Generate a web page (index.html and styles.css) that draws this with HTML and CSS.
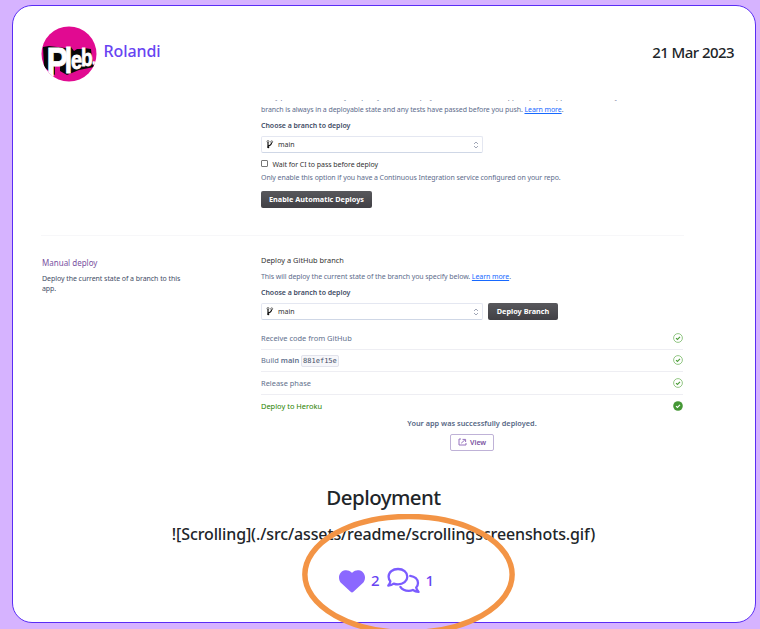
FILE: index.html
```html
<!DOCTYPE html>
<html lang="en">
<head>
<meta charset="utf-8">
<title>Rolandi - Deployment</title>
<link rel="stylesheet" href="styles.css">
</head>
<body>
<svg class="symbols" aria-hidden="true">
  <symbol id="check" viewBox="0 0 10 10"><circle cx="5" cy="5" r="4.4" fill="none" stroke="#77b966" stroke-width=".8"/><path d="M3 5.2 4.4 6.4 7 3.8" fill="none" stroke="#4c9c38" stroke-width="1.1"/></symbol>
  <symbol id="branch" viewBox="0 0 8 9"><path d="M2 1.5V7.5M2.2 5.8C4.5 5.4 5.6 4.8 5.6 2.2" fill="none" stroke="#111" stroke-width="1.2"/><circle cx="2" cy="1.5" r="1" fill="#fff" stroke="#222" stroke-width=".6"/><circle cx="5.7" cy="1.8" r="1" fill="#fff" stroke="#222" stroke-width=".6"/><circle cx="2.3" cy="7.3" r="1" fill="#111"/></symbol>
  <symbol id="sort" viewBox="0 0 6 8"><path d="M1 3 3 1 5 3M1 5 3 7 5 5" fill="none" stroke="#8991a4" stroke-width=".8"/></symbol>
</svg>
<article class="card">
  <header class="head">
    <svg class="avatar" viewBox="0 0 56 56">
      <clipPath id="round"><circle cx="28" cy="28" r="27.5"/></clipPath>
      <g clip-path="url(#round)">
        <rect width="56" height="56" fill="#e10a91"/>
        <path d="M2 21 8 20 24 22 30 21 33 25 36 23 43 23 43 22 50 23 51 32 53 41 38 44 26 49 19 45 13 49 3 41Z" fill="#080808"/>
        <path d="M14 40 19 38 19 46 14 49Z" fill="#e10a91"/>
        <text class="logo" transform="rotate(1 8 49)"><tspan x="6" y="50.500" font-size="40">P</tspan><tspan x="28.500" y="47" font-size="35">l</tspan><tspan x="36.500" y="43" font-size="25">e</tspan><tspan x="49" y="40" font-size="24">b</tspan><tspan x="63" y="38" font-size="14">.</tspan></text>
      </g>
    </svg>
    <span class="name">Rolandi</span>
    <time class="date">21 Mar 2023</time>
  </header>

  <section class="shot">
    <div class="row auto">
      <div class="main">
        <p class="cut">Every push to the branch you specify here will deploy a new version of this app. Deploys happen automatically: be sure that this</p>
        <p class="muted intro">branch is always in a deployable state and any tests have passed before you push. <a>Learn more</a>.</p>
        <p class="label l1">Choose a branch to deploy</p>
        <div class="select"><svg class="br"><use href="#branch"/></svg><span>main</span><svg class="sort"><use href="#sort"/></svg></div>
        <label class="wait"><i class="box"></i><span>Wait for CI to pass before deploy</span></label>
        <p class="muted only">Only enable this option if you have a Continuous Integration service configured on your repo.</p>
        <button class="btn enable"><span>Enable Automatic Deploys</span></button>
      </div>
    </div>
    <div class="row manual">
      <div class="side">
        <h3>Manual deploy</h3>
        <p>Deploy the current state of a branch to this<br>app.</p>
      </div>
      <div class="main">
        <h4>Deploy a GitHub branch</h4>
        <p class="muted will">This will deploy the current state of the branch you specify below. <a>Learn more</a>.</p>
        <p class="label l2">Choose a branch to deploy</p>
        <div class="pick">
          <div class="select"><svg class="br"><use href="#branch"/></svg><span>main</span><svg class="sort"><use href="#sort"/></svg></div>
          <button class="btn deploy"><span>Deploy Branch</span></button>
        </div>
        <ul class="steps">
          <li><span>Receive code from GitHub</span><svg><use href="#check"/></svg></li>
          <li><span>Build <b>main</b> <code>881ef15e</code></span><svg><use href="#check"/></svg></li>
          <li><span>Release phase</span><svg><use href="#check"/></svg></li>
          <li class="done"><span>Deploy to Heroku</span><svg viewBox="0 0 10 10"><circle cx="5" cy="5" r="4.8" fill="#459735"/><path d="M3 5.2 4.4 6.4 7 3.8" fill="none" stroke="#fff" stroke-width="1.1"/></svg></li>
        </ul>
        <p class="success">Your app was successfully deployed.</p>
        <button class="view"><svg viewBox="0 0 9 8"><path d="M3 1H1V7H8V5M3.2 5.2 6.8 2M4.5 1.4H7.6V4" fill="none" stroke="#8a62b5" stroke-width=".9"/></svg><span>View</span></button>
      </div>
    </div>
  </section>

  <h2 class="title">Deployment</h2>
  <p class="body">![Scrolling](./src/assets/readme/scrollingscreenshots.gif)</p>
  <footer class="stats">
    <svg class="heart" viewBox="0 0 512 512"><path fill="#8b68ff" d="M47.6 300.4 228.3 469.1c7.5 7 17.4 10.9 27.700 10.900s20.200-3.900 27.700-10.900L464.400 300.400c30.400-28.300 47.600-68 47.600-109.500v-5.800c0-69.900-50.500-129.500-119.400-141C347 36.500 300.600 51.400 268 84L256 96 244 84c-32.600-32.600-79-47.500-124.600-39.900C50.500 55.600 0 115.200 0 185.100v5.800c0 41.500 17.200 81.200 47.600 109.500z"/></svg>
    <span class="likes">2</span>
    <svg class="chat" viewBox="0 0 33 28" fill="none" stroke="#7b5cff" stroke-width="2.300" stroke-linecap="round" stroke-linejoin="round"><path d="M11 2C16.300 2 20.300 5.300 20.300 9.700S16.300 17.400 11 17.400C9.400 17.400 8 17.100 6.700 16.600C5.200 17.800 3.400 18.500 1.300 18.600C2.400 17.400 3.200 16 3.400 14.200C2.200 12.900 1.600 11.400 1.600 9.700C1.600 5.300 5.700 2 11 2Z"/><path d="M23.200 8.800C27.700 9.300 31 12.200 31 16.100C31 17.800 30.400 19.300 29.200 20.500C29.500 22.300 30.300 23.700 31.500 24.900C29.300 24.800 27.500 24.100 25.900 23C24.700 23.500 23.300 23.800 21.800 23.800C18 23.800 14.900 22.300 13.400 19.900"/></svg>
    <span class="comments">1</span>
  </footer>
</article>
<svg class="ring" viewBox="0 0 216 122"><ellipse cx="108" cy="61" rx="104.500" ry="58.500" fill="none" stroke="#f39445" stroke-width="5.500"/></svg>
</body>
</html>
```
FILE: styles.css
```css
* { box-sizing: border-box; margin: 0; padding: 0; }
html, body { height: 629px; overflow: hidden; }
body {
  position: relative;
  padding: 5px 4px 6px 12px;
  background: #d6b3ff;
  color: #212529;
  font-family: "Noto Sans", sans-serif;
}
.symbols { position: absolute; width: 0; height: 0; }
.card {
  width: 744px;
  height: 618px;
  padding: 20px 20px 0 28px;
  border: 1px solid #5a2df5;
  border-radius: 20px;
  background: #fff;
}
.head { display: flex; align-items: center; height: 56px; }
.avatar { width: 56px; height: 56px; margin: -1px 0 0 -.5px; }
.logo { font-family: "Liberation Sans", sans-serif; font-weight: 700; fill: #fff; stroke: #fff; stroke-width: .8; transform: scaleX(.8) translateX(1px); }
.name, .date, .title, .body, .stats { font-weight: 500; white-space: nowrap; }
.name { margin: -6px 0 0 7px; color: #6744f2; font-size: 16px; line-height: 20px; letter-spacing: -.1px; }
.date { margin: -4px 1px 0 auto; font-size: 15px; line-height: 20px; letter-spacing: -.56px; }

.shot { height: 361px; margin-top: 18px; font-size: 7px; line-height: 10px; white-space: nowrap; }
.row { display: flex; width: 643px; }
.main { width: 423px; }
.auto { justify-content: flex-end; height: 136px; border-bottom: 1px solid #f7f7f9; }
.cut { display: flex; align-items: flex-end; height: 2px; overflow: hidden; color: #5d6c8c; line-height: 10px; letter-spacing: -.03px; }
.muted { color: #5d6c8c; letter-spacing: -.09px; }
.muted a { color: #1769ff; text-decoration: underline; }
.intro { margin-top: 3px; }
.label { color: #3f4d66; font-weight: 600; letter-spacing: -.04px; }
.l1 { margin-top: 6px; }
.select {
  display: flex;
  align-items: center;
  width: 222px;
  height: 17px;
  padding: 0 3px 0 4px;
  border: 1px solid #e4e7f1;
  border-bottom-color: #cfd7e6;
  border-radius: 2px;
  color: #333;
}
.br { width: 8px; height: 9px; }
.select span { margin-left: 4px; }
.sort { width: 6px; height: 8px; margin-left: auto; }
.l1 + .select { margin-top: 5px; }
.wait { display: flex; align-items: center; height: 10px; margin-top: 7px; color: #333; letter-spacing: -.05px; }
.box { width: 7px; height: 7px; margin-top: -3px; border: 1px solid #777; border-radius: 1px; }
.wait span { margin-left: 4.500px; }
.only { margin-top: 3px; letter-spacing: -.075px; }
.btn {
  height: 17px;
  border: 0;
  border-radius: 2px;
  background: linear-gradient(#58585c, #414045);
  color: #fff;
  font: 700 7.300px/17px "Noto Sans", sans-serif;
}
.enable { display: block; width: 111px; margin-top: 8px; }

.manual { padding-top: 20px; }
.side { width: 220px; padding: 1px 0 0 1px; color: #3f4d66; }
.side h3 { color: #79519f; font-weight: 400; font-size: 8px; line-height: 11px; }
.side p { margin-top: 6px; letter-spacing: -.06px; }
h4 { margin-top: -1px; color: #333; font-weight: 400; font-size: 7.400px; }
.will { margin-top: 7px; letter-spacing: -.075px; }
.l2 { margin-top: 6px; }
.pick { display: flex; gap: 5px; margin-top: 5px; }
.deploy { width: 70px; }
.steps { width: 422px; margin-top: 7px; list-style: none; font-size: 7.450px; }
.steps li {
  display: flex;
  align-items: center;
  justify-content: space-between;
  height: 22.500px;
  border-bottom: 1px solid #eeeef3;
  color: #62708d;
}
.steps li.done { height: 22px; border: 0; color: #298200; }
.steps svg { width: 10px; height: 10px; }
.steps b { font-weight: 600; }
code { padding: 1px 1px; border: 1px solid #e2e3ec; border-radius: 2px; background: #f7f7fa; color: #3f4d66; font: 7px "DejaVu Sans Mono", monospace; }
.success { width: 422px; margin-top: 1px; color: #566785; font-size: 7.350px; font-weight: 600; text-align: center; }
.view {
  display: flex;
  align-items: center;
  width: 44px;
  height: 17px;
  margin: 6px 0 0 189px;
  padding-left: 7px;
  border: 1px solid #bfb2d7;
  border-radius: 2px;
  background: #fff;
  color: #79519f;
  font: 600 7px "Noto Sans", sans-serif;
}
.view svg { width: 9px; height: 8px; margin-right: 3px; }

.title { margin: 23px 0 0 -9px; font-size: 20.500px; line-height: 26px; letter-spacing: -.55px; text-align: center; }
.body { margin: 13px 0 0 -9px; font-size: 16px; line-height: 22px; letter-spacing: -.12px; text-align: center; }
.stats { display: flex; align-items: center; height: 32px; margin: 20px 0 0 298px; color: #6744f2; font-size: 15px; }
.heart { width: 26px; height: 26px; }
.stats span { margin-top: -2px; }
.likes { margin-left: 6px; }
.chat { width: 33px; height: 28px; margin-left: 7px; }
.comments { margin-left: 6px; }
.ring { position: absolute; left: 301px; top: 514px; width: 215px; height: 121px; }
```
